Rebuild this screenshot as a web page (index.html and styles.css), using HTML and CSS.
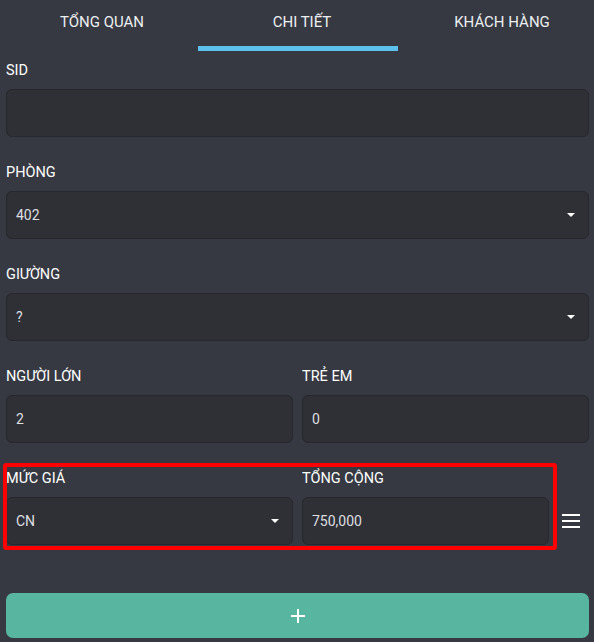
FILE: index.html
```html
<!DOCTYPE html>
<html lang="vi">
<head>
    <meta charset="UTF-8">
    <meta name="viewport" content="width=device-width, initial-scale=1.0">
    <title>Chi tiết</title>
    <link rel="stylesheet" href="styles.css">
</head>
<body>
    <nav class="tabs">
        <a class="tab">Tổng quan</a>
        <a class="tab active">Chi tiết</a>
        <a class="tab">Khách hàng</a>
    </nav>

    <form class="detail-form">
        <div class="field">
            <label>SID</label>
            <div class="input"></div>
        </div>

        <div class="field">
            <label>Phòng</label>
            <div class="input select">402</div>
        </div>

        <div class="field">
            <label>Giường</label>
            <div class="input select">?</div>
        </div>

        <div class="row">
            <div class="field">
                <label>Người lớn</label>
                <div class="input">2</div>
            </div>
            <div class="field">
                <label>Trẻ em</label>
                <div class="input">0</div>
            </div>
        </div>

        <div class="row price-row">
            <div class="field price">
                <label>Mức giá</label>
                <div class="input select">CN</div>
            </div>
            <div class="field total">
                <label>Tổng cộng</label>
                <div class="input">750,000</div>
            </div>
            <div class="menu-btn">
                <span></span><span></span><span></span>
            </div>
            <div class="highlight"></div>
        </div>

        <button type="button" class="add-btn">
            <svg width="14" height="14" viewBox="0 0 14 14">
                <path d="M7 0v14M0 7h14" stroke="#fff" stroke-width="2"/>
            </svg>
        </button>
    </form>
</body>
</html>
```

FILE: styles.css
```css
body {
    font-family: Roboto, "Noto Sans", sans-serif;
    background-color: #363942;
    margin: 0;
    padding: 0;
    color: #fff;
    width: 594px;
    height: 642px;
    overflow: hidden;
}

.tabs {
    display: grid;
    grid-template-columns: 200px 200px 200px;
    margin-left: -2px;
    height: 51px;
}

.tab {
    display: block;
    box-sizing: border-box;
    height: 51px;
    line-height: 44px;
    padding-left: 8px;
    border-bottom: 5px solid transparent;
    text-align: center;
    text-transform: uppercase;
    font-size: 15px;
    font-weight: 400;
    color: #eceff1;
}

.tab.active {
    border-bottom-color: #5bc0eb;
}

.detail-form {
    padding: 12px 5px 0 6px;
}

.field {
    margin-bottom: 28px;
}

.field label {
    display: block;
    height: 16px;
    line-height: 16px;
    margin-bottom: 10px;
    font-size: 14.5px;
    font-weight: 400;
    text-transform: uppercase;
    color: #fff;
}

.input {
    position: relative;
    box-sizing: border-box;
    height: 48px;
    line-height: 46px;
    padding: 0 9px;
    background-color: #2f3036;
    border: 1px solid #27282d;
    border-radius: 6px;
    font-size: 14px;
    color: #dedfe1;
}

.input.select::after {
    content: "";
    position: absolute;
    right: 13px;
    top: 21px;
    border-left: 4px solid transparent;
    border-right: 4px solid transparent;
    border-top: 4px solid #fff;
}

.row {
    display: grid;
    grid-template-columns: 287px 1fr;
    column-gap: 9px;
}

.price-row {
    position: relative;
    grid-template-columns: 287px 247px 1fr;
}

.menu-btn {
    display: flex;
    flex-direction: column;
    justify-content: center;
    align-items: center;
    gap: 4px;
    padding-top: 26px;
    padding-right: 6px;
    height: 48px;
}

.menu-btn span {
    display: block;
    width: 18px;
    height: 2px;
    background-color: #fff;
}

.highlight {
    position: absolute;
    left: -3px;
    top: -8px;
    width: 554px;
    height: 87px;
    box-sizing: border-box;
    border: 4px solid #ff0000;
    border-radius: 3px;
    pointer-events: none;
}

.add-btn {
    display: flex;
    align-items: center;
    justify-content: center;
    width: 583px;
    height: 45px;
    margin-top: 20px;
    background-color: #58b5a0;
    border: none;
    border-radius: 7px;
    cursor: pointer;
}
```
